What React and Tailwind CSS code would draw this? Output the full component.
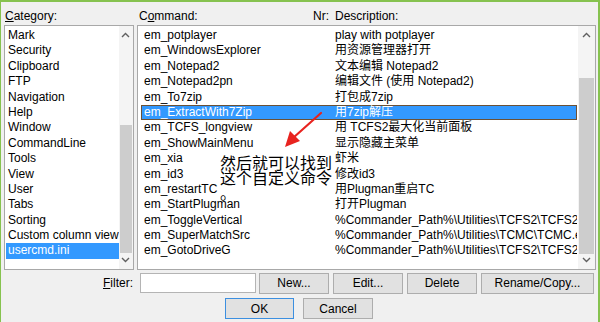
import React from "react";

const categories = [
  "Mark", "Security", "Clipboard", "FTP", "Navigation", "Help", "Window",
  "CommandLine", "Tools", "View", "User", "Tabs", "Sorting",
  "Custom column view", "usercmd.ini",
];

const commands = [
  ["em_potplayer", "play with potplayer"],
  ["em_WindowsExplorer", "用资源管理器打开"],
  ["em_Notepad2", "文本编辑 Notepad2"],
  ["em_Notepad2pn", "编辑文件 (使用 Notepad2)"],
  ["em_To7zip", "打包成7zip"],
  ["em_ExtractWith7Zip", "用7zip解压"],
  ["em_TCFS_longview", "用 TCFS2最大化当前面板"],
  ["em_ShowMainMenu", "显示隐藏主菜单"],
  ["em_xia", "虾米"],
  ["em_id3", "修改id3"],
  ["em_restartTC", "用Plugman重启TC"],
  ["em_StartPlugman", "打开Plugman"],
  ["em_ToggleVertical", "%Commander_Path%\\Utilities\\TCFS2\\TCFS2.exe"],
  ["em_SuperMatchSrc", "%Commander_Path%\\Utilities\\TCMC\\TCMC.exe"],
  ["em_GotoDriveG", "%Commander_Path%\\Utilities\\TCFS2\\TCFS2.exe"],
];

const Chevron = ({ up }) => (
  <svg width="9" height="6" viewBox="0 0 9 6">
    <path
      d={up ? "M1 5 L4.5 1.5 L8 5" : "M1 1 L4.5 4.5 L8 1"}
      fill="none"
      stroke="#606060"
      strokeWidth="1.4"
    />
  </svg>
);

// thumbTop / thumbH are measured from the top of the scrollbar
const ScrollBar = ({ thumbTop, thumbH }) => (
  <div className="relative w-[17px] h-full bg-[#f4f4f4] flex flex-col items-center justify-between py-[6px]">
    <Chevron up />
    <div
      className="absolute left-[1px] right-[1px] bg-[#cdcdcd]"
      style={{ top: thumbTop, height: thumbH }}
    />
    <Chevron />
  </div>
);

const Btn = ({ children, w, def }) => (
  <button
    className={`h-[21px] ${w} bg-[#e1e1e1] border ${def ? "border-[#3c8fe0]" : "border-[#adadad]"} text-[12px] text-black leading-none`}
  >
    {children}
  </button>
);

export default function App() {
  return (
    <div
      className="relative w-[600px] h-[322px] bg-[#f0f0f0] border-t-2 border-r-2 border-l border-[#86c24f] text-[12px] text-black overflow-hidden"
      style={{ fontFamily: "'Liberation Sans', 'Noto Sans CJK SC', sans-serif" }}
    >
      {/* labels */}
      <div className="flex h-[23px] pt-[6px] leading-[16px]">
        <div className="w-[136px] pl-[4px]">
          <span className="underline">C</span>ategory:
        </div>
        <div className="w-[176px] pl-[2px]">
          C<span className="underline">o</span>mmand:
        </div>
        <div className="w-[22px]">Nr:</div>
        <div>Description:</div>
      </div>

      {/* lists */}
      <div className="flex h-[245px] pl-[3px] gap-[3px]">
        <div className="w-[130px] h-full bg-white border border-[#a8a8a8] flex">
          <div className="flex-1 pt-[2px] pl-[1px]">
            {categories.map((c) => (
              <div
                key={c}
                className={`h-[15.4px] leading-[15.4px] pl-[2px] whitespace-nowrap ${c === "usercmd.ini" ? "bg-[#3399ff] text-white" : ""}`}
              >
                {c}
              </div>
            ))}
          </div>
          <ScrollBar thumbTop={99} thumbH={128} />
        </div>

        <div className="w-[459px] h-full bg-white border border-[#a8a8a8] flex">
          <div className="flex-1 pt-[2px] pl-[3px] pr-[1px] overflow-hidden">
            {commands.map(([c, d], i) => (
              <div
                key={c}
                className={`flex h-[15.4px] leading-[15.4px] whitespace-nowrap overflow-hidden ${i === 5 ? "bg-[#3399ff] text-white shadow-[inset_0_0_0_1px_#6b5136]" : ""}`}
              >
                <div className="w-[194px] shrink-0 pl-[3px]">{c}</div>
                <div>{d}</div>
              </div>
            ))}
          </div>
          <ScrollBar thumbTop={52} thumbH={176} />
        </div>
      </div>

      {/* filter + buttons */}
      <div className="flex items-center h-[20px] mt-[3px]">
        <div className="w-[132px] text-right">
          <span className="underline">F</span>ilter:
        </div>
        <div className="ml-[7px] w-[116px] h-[20px] bg-white border border-[#b4b4b4]" />
        <div className="ml-[3px] flex gap-[4px]">
          <Btn w="w-[70px]">New...</Btn>
          <Btn w="w-[70px]">Edit...</Btn>
          <Btn w="w-[70px]">Delete</Btn>
          <Btn w="w-[113px]">Rename/Copy...</Btn>
        </div>
      </div>

      <div className="flex mt-[5px] pl-[224px] gap-[9px]">
        <Btn w="w-[69px]" def>OK</Btn>
        <Btn w="w-[70px]">Cancel</Btn>
      </div>

      {/* annotation overlay */}
      <svg className="absolute left-[280px] top-[108px]" width="45" height="42" viewBox="0 0 45 42">
        <path d="M40 3 L12 28" stroke="#e8231f" strokeWidth="2.2" strokeLinecap="round" />
        <path d="M4 37 L9 21 L19 31 Z" fill="#e8231f" />
      </svg>
      <div
        className="absolute left-[219px] top-[153px] text-[16px] leading-[15px] text-black"
        style={{ fontFamily: "'Noto Sans CJK SC', sans-serif" }}
      >
        <div>然后就可以找到</div>
        <div>这个自定义命令</div>
        <div>。</div>
      </div>
    </div>
  );
}
